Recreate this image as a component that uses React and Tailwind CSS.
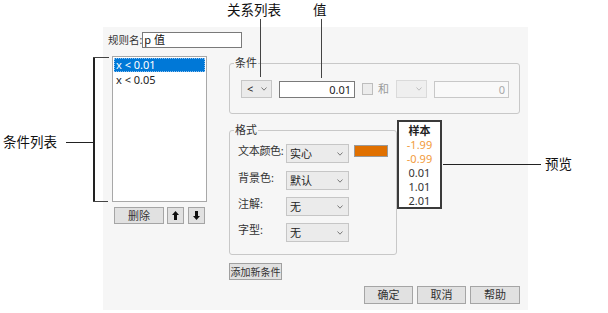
import React from "react";

const Chev = ({ c = "#7a7a7a" }) => (
  <svg width="6" height="4" viewBox="0 0 6 4" className="shrink-0">
    <polyline points="0.5,0.5 3,3.2 5.5,0.5" fill="none" stroke={c} strokeWidth="1" />
  </svg>
);

const Sel = ({ label }) => (
  <div className="flex items-center justify-between w-[63px] h-[19px] bg-[#ebebeb] border border-[#c6c6c6] pl-[3px] pr-[5px] text-[11px] leading-[14px] text-[#222]">
    <span>{label}</span>
    <Chev />
  </div>
);

const Btn = ({ children, cls }) => (
  <div className={cls}>{children}</div>
);

export default function App() {
  return (
    <div className="relative w-[608px] h-[313px] bg-white overflow-hidden font-[family-name:'Noto_Sans','Noto_Sans_CJK_SC',sans-serif] text-[#222]">
      <div className="pt-[27px] pl-[103px]">
        <div className="w-[425px] h-[283px] bg-[#f6f6f6] pt-[5px] pl-[5px]">
          {/* rule name row */}
          <div className="flex items-center h-[16px]">
            <span className="shrink-0 whitespace-nowrap text-[10.5px] leading-[14px] text-[#333]">规则名:</span>
            <div className="w-[100px] h-[16px] bg-white border border-[#7a7a7a] pl-[1px] text-[11px] leading-[14px] text-[#111]">p 值</div>
          </div>

          <div className="flex mt-[8px]">
            {/* left column */}
            <div className="ml-[4px] w-[95px] flex flex-col">
              <div className="h-[146px] bg-white border border-[#a8a8a8] p-[1px] text-[11px]">
                <div className="h-[14px] bg-[#0078d7] text-white pl-[2px] leading-[14px] outline outline-1 outline-dotted outline-[#8fc0ee] -outline-offset-1 whitespace-pre">x &lt; 0.01</div>
                <div className="h-[14px] pl-[2px] leading-[14px] mt-[1px] text-[#222] whitespace-pre">x &lt; 0.05</div>
              </div>
              <div className="flex mt-[5px] ml-[2px]">
                <Btn cls="w-[50px] h-[17px] bg-[#e1e1e1] border border-[#a5a5a5] flex items-center justify-center text-[11px] leading-[14px] text-[#333]">删除</Btn>
                <Btn cls="ml-[3px] w-[17px] h-[17px] bg-[#e1e1e1] border border-[#a5a5a5] flex items-center justify-center">
                  <svg width="7" height="9" viewBox="0 0 7 9"><polygon points="3.5,0 7,4 5,4 5,9 2,9 2,4 0,4" fill="#111" /></svg>
                </Btn>
                <Btn cls="ml-[4px] w-[17px] h-[17px] bg-[#e1e1e1] border border-[#a5a5a5] flex items-center justify-center">
                  <svg width="7" height="9" viewBox="0 0 7 9"><polygon points="3.5,9 7,5 5,5 5,0 2,0 2,5 0,5" fill="#111" /></svg>
                </Btn>
              </div>
            </div>

            {/* right column */}
            <div className="ml-[22px] w-[291px] flex flex-col pt-[7px]">
              {/* condition group */}
              <div className="relative h-[51px] border border-[#c8c8c8] rounded-[3px] pt-[16px] pl-[11px]">
                <span className="absolute -top-[8px] left-[4px] bg-[#f6f6f6] px-[1px] text-[11px] leading-[14px] text-[#333]">条件</span>
                <div className="flex items-center">
                  <div className="flex items-center justify-between w-[31px] h-[18px] bg-[#ebebeb] border border-[#c6c6c6] pl-[5px] pr-[4px] text-[11px] leading-[14px]">
                    <span>&lt;</span>
                    <Chev />
                  </div>
                  <div className="ml-[7px] w-[76px] h-[17px] bg-white border border-[#7a7a7a] pr-[3px] text-right text-[11px] leading-[15px] text-[#222]">0.01</div>
                  <div className="ml-[7px] w-[11px] h-[12px] bg-[#ececec] border border-[#bdbdbd]" />
                  <span className="ml-[5px] text-[11px] leading-[14px] text-[#9a9a9a]">和</span>
                  <div className="ml-[7px] flex items-center justify-end w-[31px] h-[18px] bg-[#efefef] border border-[#dadada] pr-[4px]">
                    <Chev c="#bdbdbd" />
                  </div>
                  <div className="ml-[7px] w-[75px] h-[17px] bg-[#f9f9f9] border border-[#c8c8c8] pr-[3px] text-right text-[11px] leading-[15px] text-[#a8a8a8]">0</div>
                </div>
              </div>

              {/* format + preview */}
              <div className="flex items-start mt-[6px]">
                <div className="relative mt-[10px] w-[168px] h-[125px] border border-[#c8c8c8] rounded-[3px] pt-[13px] pl-[8px]">
                  <span className="absolute -top-[8px] left-[4px] bg-[#f6f6f6] px-[1px] text-[11px] leading-[14px] text-[#333]">格式</span>
                  <div className="flex flex-col gap-[7px]">
                    <div className="flex items-start">
                      <span className="w-[48px] text-[11px] leading-[14px] tracking-[-0.3px] text-[#333]">文本颜色:</span>
                      <Sel label="实心" />
                      <div className="ml-[5px] mt-[1px] w-[34px] h-[12px] bg-[#e07000] border border-[#9a9a9a]" />
                    </div>
                    <div className="flex items-start mt-[1px]">
                      <span className="w-[48px] text-[11px] leading-[14px] text-[#333]">背景色:</span>
                      <Sel label="默认" />
                    </div>
                    <div className="flex items-start">
                      <span className="w-[48px] text-[11px] leading-[14px] text-[#333]">注解:</span>
                      <Sel label="无" />
                    </div>
                    <div className="flex items-start">
                      <span className="w-[48px] text-[11px] leading-[14px] text-[#333]">字型:</span>
                      <Sel label="无" />
                    </div>
                  </div>
                </div>
                <div className="w-[45px] h-[89px] border-2 border-[#3a3a3a] bg-white flex flex-col items-center pt-[2px] text-[11px] leading-[14px]">
                  <span className="font-bold text-[#222]">样本</span>
                  <span className="text-[#f29b3b]">-1.99</span>
                  <span className="text-[#f29b3b]">-0.99</span>
                  <span className="text-[#333]">0.01</span>
                  <span className="text-[#333]">1.01</span>
                  <span className="text-[#333]">2.01</span>
                </div>
              </div>

              <div className="mt-[8px] flex">
                <Btn cls="w-[53px] h-[17px] bg-[#e1e1e1] border border-[#a0a0a0] flex items-center justify-center text-[10px] leading-[14px] text-[#333] whitespace-nowrap overflow-hidden">添加新条件</Btn>
              </div>

              <div className="mt-[6px] flex justify-end gap-[4px]">
                <Btn cls="w-[49px] h-[18px] bg-[#e1e1e1] border border-[#a5a5a5] flex items-center justify-center text-[11px] leading-[14px] text-[#333]">确定</Btn>
                <Btn cls="w-[49px] h-[18px] bg-[#e1e1e1] border border-[#a5a5a5] flex items-center justify-center text-[11px] leading-[14px] text-[#333]">取消</Btn>
                <Btn cls="w-[50px] h-[18px] bg-[#e1e1e1] border border-[#a5a5a5] flex items-center justify-center text-[11px] leading-[14px] text-[#333]">帮助</Btn>
              </div>
            </div>
          </div>
        </div>
      </div>

      {/* callouts */}
      <span className="absolute left-[227px] top-[2px] text-[13.5px] leading-[16px] text-[#111]">关系列表</span>
      <div className="absolute left-[259.5px] top-[19px] w-[1.5px] h-[58px] bg-[#444]" />
      <span className="absolute left-[313px] top-[2px] text-[13.5px] leading-[16px] text-[#111]">值</span>
      <div className="absolute left-[320.5px] top-[19px] w-[1.5px] h-[59px] bg-[#444]" />

      <span className="absolute left-[3px] top-[134px] text-[13.5px] leading-[16px] text-[#111]">条件列表</span>
      <div className="absolute left-[66px] top-[141.5px] w-[27px] h-[1.5px] bg-[#222]" />
      <div className="absolute left-[93px] top-[56.5px] w-[1.5px] h-[145px] bg-[#222]" />
      <div className="absolute left-[93px] top-[56.5px] w-[16px] h-[1.5px] bg-[#444]" />
      <div className="absolute left-[93px] top-[200.5px] w-[15px] h-[1.5px] bg-[#444]" />

      <div className="absolute left-[443px] top-[163.5px] w-[98px] h-[1.5px] bg-[#222]" />
      <span className="absolute left-[545px] top-[156px] text-[13.5px] leading-[16px] text-[#111]">预览</span>
    </div>
  );
}
